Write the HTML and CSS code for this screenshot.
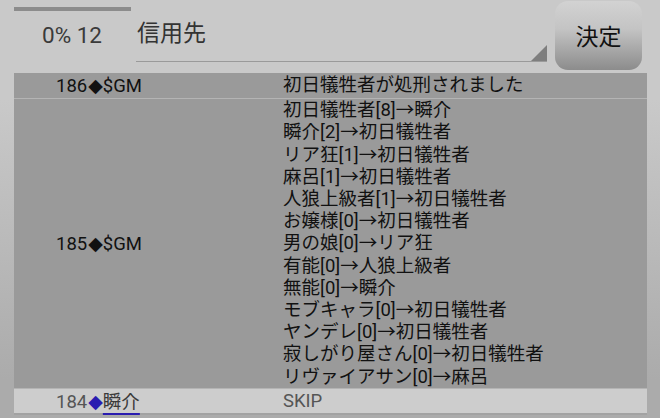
FILE: index.html
```html
<!DOCTYPE html>
<html lang="ja">
<head>
<meta charset="utf-8">
<link rel="stylesheet" href="styles.css">
</head>
<body>
<div class="page">
  <header class="header">
    <div class="status">
      <div class="progress"></div>
      <div class="count">0% 12</div>
    </div>
    <div class="spinner">
      <span class="spinner-text">信用先</span>
      <span class="spinner-arrow"></span>
    </div>
    <button class="decide">決定</button>
  </header>
  <div class="log">
    <div class="row dark">
      <div class="who">186<span class="dia">◆</span>$GM</div>
      <div class="msg">初日犠牲者が処刑されました</div>
    </div>
    <div class="sep"></div>
    <div class="row dark tall">
      <div class="who">185<span class="dia">◆</span>$GM</div>
      <div class="msg">初日犠牲者[8]→瞬介<br>瞬介[2]→初日犠牲者<br>リア狂[1]→初日犠牲者<br>麻呂[1]→初日犠牲者<br>人狼上級者[1]→初日犠牲者<br>お嬢様[0]→初日犠牲者<br>男の娘[0]→リア狂<br>有能[0]→人狼上級者<br>無能[0]→瞬介<br>モブキャラ[0]→初日犠牲者<br>ヤンデレ[0]→初日犠牲者<br>寂しがり屋さん[0]→初日犠牲者<br>リヴァイアサン[0]→麻呂</div>
    </div>
    <div class="sep"></div>
    <div class="row light">
      <div class="who">184<span class="dia blue">◆</span><span class="name">瞬介</span></div>
      <div class="msg">SKIP</div>
    </div>
  </div>
</div>
</body>
</html>
```
FILE: styles.css
```css
* { box-sizing: border-box; }
html, body {
  margin: 0;
  padding: 0;
}
body {
  width: 660px;
  height: 418px;
  overflow: hidden;
  background: #c9c9c9;
  font-family: Roboto, "Noto Sans CJK JP", sans-serif;
}
.page {
  width: 660px;
  height: 418px;
  background: linear-gradient(to bottom, #c9c9c9 0, #c9c9c9 100px, #ababab 380px);
}
.header {
  display: flex;
  height: 73px;
  align-items: stretch;
}
.status {
  width: 122px;
  margin-left: 14px;
  display: flex;
  flex-direction: column;
}
.progress {
  margin-top: 7px;
  width: 117px;
  height: 4px;
  background: #8c8c8c;
}
.count {
  margin-top: 11px;
  text-align: center;
  font-size: 22.5px;
  color: #3a3a3a;
  padding-right: 6px;
}
.spinner {
  width: 411px;
  height: 62px;
  border-bottom: 1px solid #9a9a9a;
  position: relative;
  padding-top: 16px;
  padding-left: 1px;
}
.spinner-text {
  font-family: "Noto Sans CJK JP", sans-serif;
  font-size: 23px;
  line-height: 30px;
  color: #333;
}
.spinner-arrow {
  position: absolute;
  right: 0;
  bottom: 0;
  width: 0;
  height: 0;
  border-left: 16px solid transparent;
  border-bottom: 16px solid #7e7e7e;
}
.decide {
  margin: 1px 0 0 8px;
  width: 87px;
  height: 69px;
  border: none;
  border-radius: 13px;
  background: linear-gradient(to bottom, #d2d2d2 0%, #c4c4c4 40%, #8c8c8c 100%);
  font-family: "Noto Sans CJK JP", sans-serif;
  font-size: 23px;
  color: #111;
  padding: 0 0 2px;
}
.log {
  margin: 0 13px 0 14px;
  border-bottom: 2px solid #a2a2a2;
}
.row {
  display: grid;
  grid-template-columns: 269px 1fr;
  align-items: center;
  font-size: 18.5px;
}
.row.dark {
  background: #9a9a9a;
  color: #111;
  height: 25px;
}
.row.tall {
  height: 289px;
}
.row.light {
  background: #cdcdcd;
  color: #555;
  height: 24px;
}
.sep {
  height: 1px;
  background: #b4b4b4;
}
.who {
  padding-left: 42px;
  line-height: 22px;
  white-space: nowrap;
}
.dia {
  font-family: "DejaVu Sans", sans-serif;
  font-size: 19px;
  line-height: 20px;
  margin: 0 0 0 1px;
}
.dia.blue {
  color: #2a1cb0;
}
.msg {
  line-height: 22.2px;
  font-family: Roboto, "Noto Sans CJK JP", sans-serif;
  white-space: nowrap;
}
.name {
  font-family: "Noto Sans CJK JP", sans-serif;
  color: #3a3a3a;
  text-decoration: underline;
  text-decoration-color: #2a1cb0;
  text-decoration-thickness: 2px;
  text-underline-offset: 5px;
}
```
